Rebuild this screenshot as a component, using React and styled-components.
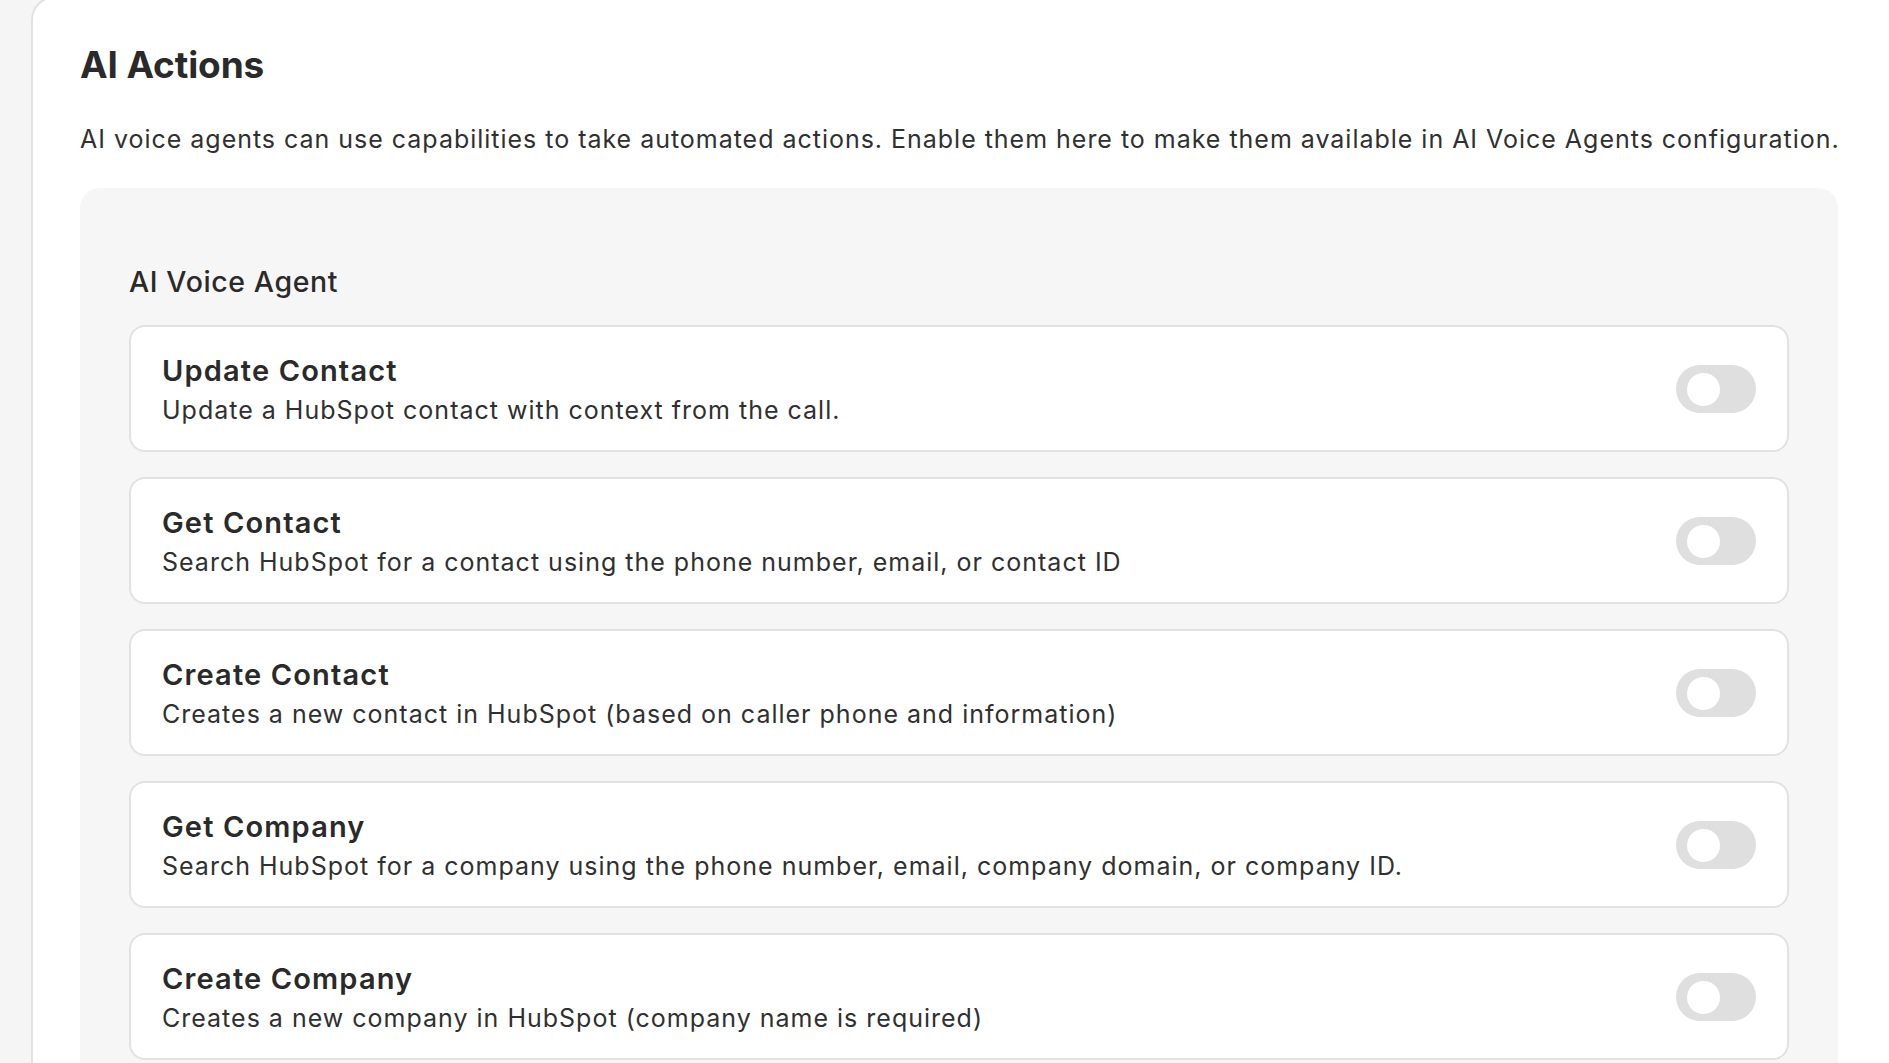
import React, { useState } from "react";
import styled, { createGlobalStyle } from "styled-components";

const actions = [
  { id: "update-contact", title: "Update Contact", description: "Update a HubSpot contact with context from the call." },
  { id: "get-contact", title: "Get Contact", description: "Search HubSpot for a contact using the phone number, email, or contact ID" },
  { id: "create-contact", title: "Create Contact", description: "Creates a new contact in HubSpot (based on caller phone and information)" },
  { id: "get-company", title: "Get Company", description: "Search HubSpot for a company using the phone number, email, company domain, or company ID." },
  { id: "create-company", title: "Create Company", description: "Creates a new company in HubSpot (company name is required)" },
];

const GlobalStyle = createGlobalStyle`
  html, body {
    margin: 0;
    padding: 0;
    background: #f5f5f5;
    font-family: Inter, "Liberation Sans", sans-serif;
    color: #2b2b2b;
    overflow: hidden;
  }
  * { box-sizing: border-box; }
`;

const Page = styled.div`
  height: 100vh;
  padding-left: 31px;
  overflow: hidden;
`;

const Panel = styled.main`
  margin-top: -4px;
  margin-right: -40px;
  min-height: calc(100vh + 4px);
  background: #ffffff;
  border-left: 2px solid #e2e2e2;
  border-top: 2px solid #e2e2e2;
  border-top-left-radius: 24px;
  padding: 45px 91px 0 47px;
`;

const Heading = styled.h1`
  margin: 0;
  font-size: 37px;
  line-height: 1.2;
  font-weight: 700;
  letter-spacing: -0.12px;
  color: #2a2a2a;
`;

const Intro = styled.p`
  margin: 37px 0 0;
  font-size: 25px;
  line-height: 30px;
  font-weight: 400;
  letter-spacing: 0.98px;
  color: #303030;
  white-space: nowrap;
`;

const Section = styled.section`
  margin-top: 34px;
  background: #f6f6f6;
  border-radius: 20px;
  padding: 77px 49px 40px;
`;

const SectionLabel = styled.h2`
  margin: 0 0 25px;
  font-size: 28.5px;
  line-height: 1.2;
  font-weight: 500;
  letter-spacing: 0.6px;
  color: #2a2a2a;
`;

const List = styled.div`
  display: flex;
  flex-direction: column;
  gap: 25px;
`;

const Card = styled.div`
  display: flex;
  align-items: center;
  justify-content: space-between;
  background: #ffffff;
  border: 2px solid #e2e2e2;
  border-radius: 16px;
  padding: 26.5px 31px 24.5px 31px;
`;

const CardText = styled.div`
  display: flex;
  flex-direction: column;
`;

const CardTitle = styled.div`
  font-size: 29px;
  line-height: 36px;
  font-weight: 600;
  letter-spacing: 1.15px;
  color: #2a2a2a;
`;

const CardDesc = styled.div`
  margin-top: 6px;
  font-size: 25px;
  line-height: 30px;
  letter-spacing: 1px;
  color: #303030;
`;

const Toggle = styled.button`
  position: relative;
  flex: none;
  width: 80px;
  height: 48px;
  border: none;
  padding: 0;
  border-radius: 24px;
  background: ${(p) => (p.$on ? "#2b2b2b" : "#dfdfdf")};
  cursor: pointer;

  &::after {
    content: "";
    position: absolute;
    top: 7.5px;
    left: ${(p) => (p.$on ? "37px" : "11px")};
    width: 33px;
    height: 33px;
    border-radius: 50%;
    background: #ffffff;
    transition: left 0.2s ease;
  }
`;

const ActionCard = ({ action }) => {
  const [on, setOn] = useState(false);
  return (
    <Card>
      <CardText>
        <CardTitle>{action.title}</CardTitle>
        <CardDesc>{action.description}</CardDesc>
      </CardText>
      <Toggle $on={on} aria-label={action.title} onClick={() => setOn(!on)} />
    </Card>
  );
};

export default function App() {
  return (
    <Page>
      <GlobalStyle />
      <Panel>
        <Heading>AI Actions</Heading>
        <Intro>
          AI voice agents can use capabilities to take automated actions. Enable them here to make them available in AI Voice Agents configuration.
        </Intro>
        <Section>
          <SectionLabel>AI Voice Agent</SectionLabel>
          <List>
            {actions.map((a) => (
              <ActionCard key={a.id} action={a} />
            ))}
          </List>
        </Section>
      </Panel>
    </Page>
  );
}
